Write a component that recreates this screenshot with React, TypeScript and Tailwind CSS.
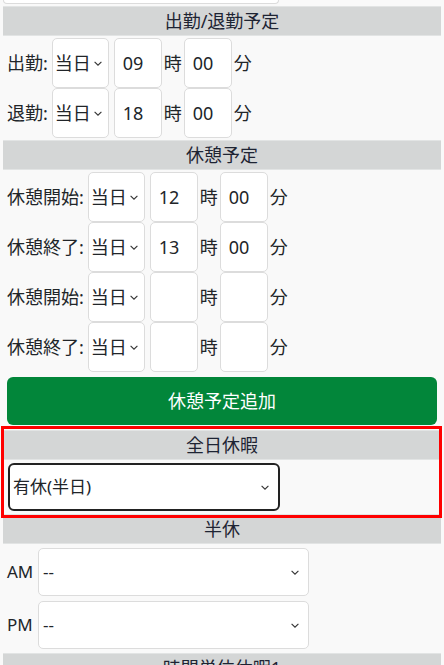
import React from "react";

const Chevron = ({ w = 8 }: { w?: number }) => (
  <svg width={w} height={5} viewBox="0 0 8 5" className="shrink-0">
    <path d="M0.6 0.8 L4 4.2 L7.4 0.8" fill="none" stroke="#333" strokeWidth="1.1" />
  </svg>
);

const Header = ({ title }: { title: string }) => (
  <div className="h-[30px] bg-[#d4d6d6] flex items-center justify-center text-[18px] text-[#1e2433] border-y border-[#e2e4e4]">
    {title}
  </div>
);

const DaySelect = () => (
  <div className="w-[57px] h-[50px] bg-white border border-[#dcdcdc] rounded-[5px] flex items-center justify-between pl-[2px] pr-[6px] text-[18px]">
    <span>当日</span>
    <Chevron />
  </div>
);

const NumBox = ({ v }: { v: string }) => (
  <div className="w-[48px] h-[50px] bg-white border border-[#dcdcdc] rounded-[5px] flex items-center pl-[8px] text-[18px]">
    {v}
  </div>
);

const TimeRow = ({ label, h, m }: { label: string; h: string; m: string }) => (
  <div className="flex items-center pl-[4px]">
    <span className="text-[18px] w-auto">{label}</span>
    <div className="ml-[4px]">
      <DaySelect />
    </div>
    <div className="ml-[5px]">
      <NumBox v={h} />
    </div>
    <span className="text-[18px] mx-[2px]">時</span>
    <NumBox v={m} />
    <span className="text-[18px] ml-[2px]">分</span>
  </div>
);

const HalfRow = ({ label }: { label: string }) => (
  <div className="flex items-center pl-[4px]">
    <span className="text-[17px] w-[31px]">{label}</span>
    <div className="w-[271px] h-[48px] bg-white border border-[#dcdcdc] rounded-[5px] flex items-center justify-between pl-[4px] pr-[9px] text-[17px]">
      <span>--</span>
      <Chevron />
    </div>
  </div>
);

export default function App() {
  return (
    <div
      className="w-[444px] h-[665px] overflow-hidden bg-[#f9f9f9] px-[3px] text-[#212529]"
      style={{ fontFamily: '"Noto Sans", "Noto Sans CJK JP", sans-serif' }}
    >
      <div className="h-[4px] w-[276px] bg-white border-x border-b border-[#dcdcdc] rounded-b-[5px]" />

      <div className="mt-[2px]">
        <Header title="出勤/退勤予定" />
        <div className="pt-[2px] pb-[2px] flex flex-col">
          <TimeRow label="出勤:" h="09" m="00" />
          <TimeRow label="退勤:" h="18" m="00" />
        </div>
      </div>

      <div>
        <Header title="休憩予定" />
        <div className="pt-[2px] flex flex-col">
          <TimeRow label="休憩開始:" h="12" m="00" />
          <TimeRow label="休憩終了:" h="13" m="00" />
          <TimeRow label="休憩開始:" h="" m="" />
          <TimeRow label="休憩終了:" h="" m="" />
        </div>
        <button className="mt-[5px] mx-[4px] w-[430px] h-[48px] rounded-[6px] bg-[#02863a] text-white text-[18px] flex items-center justify-center">
          休憩予定追加
        </button>
      </div>

      <div className="relative mt-[5px]">
        <Header title="全日休暇" />
        <div className="pt-[3px] pb-[3px] pl-[5px]">
          <div className="w-[272px] h-[48px] bg-white border-2 border-[#222] rounded-[6px] flex items-center justify-between pl-[3px] pr-[9px] text-[17px]">
            <span>有休(半日)</span>
            <Chevron />
          </div>
        </div>
        <div className="absolute left-[-2px] right-[-1px] top-[-4px] bottom-[-4px] border-[3px] border-[#ff0000] pointer-events-none" />
      </div>

      <div>
        <Header title="半休" />
        <div className="pt-[4px] flex flex-col gap-[5px]">
          <HalfRow label="AM" />
          <HalfRow label="PM" />
        </div>
      </div>

      <div className="mt-[4px]">
        <Header title="時間単位休暇1" />
      </div>
    </div>
  );
}
